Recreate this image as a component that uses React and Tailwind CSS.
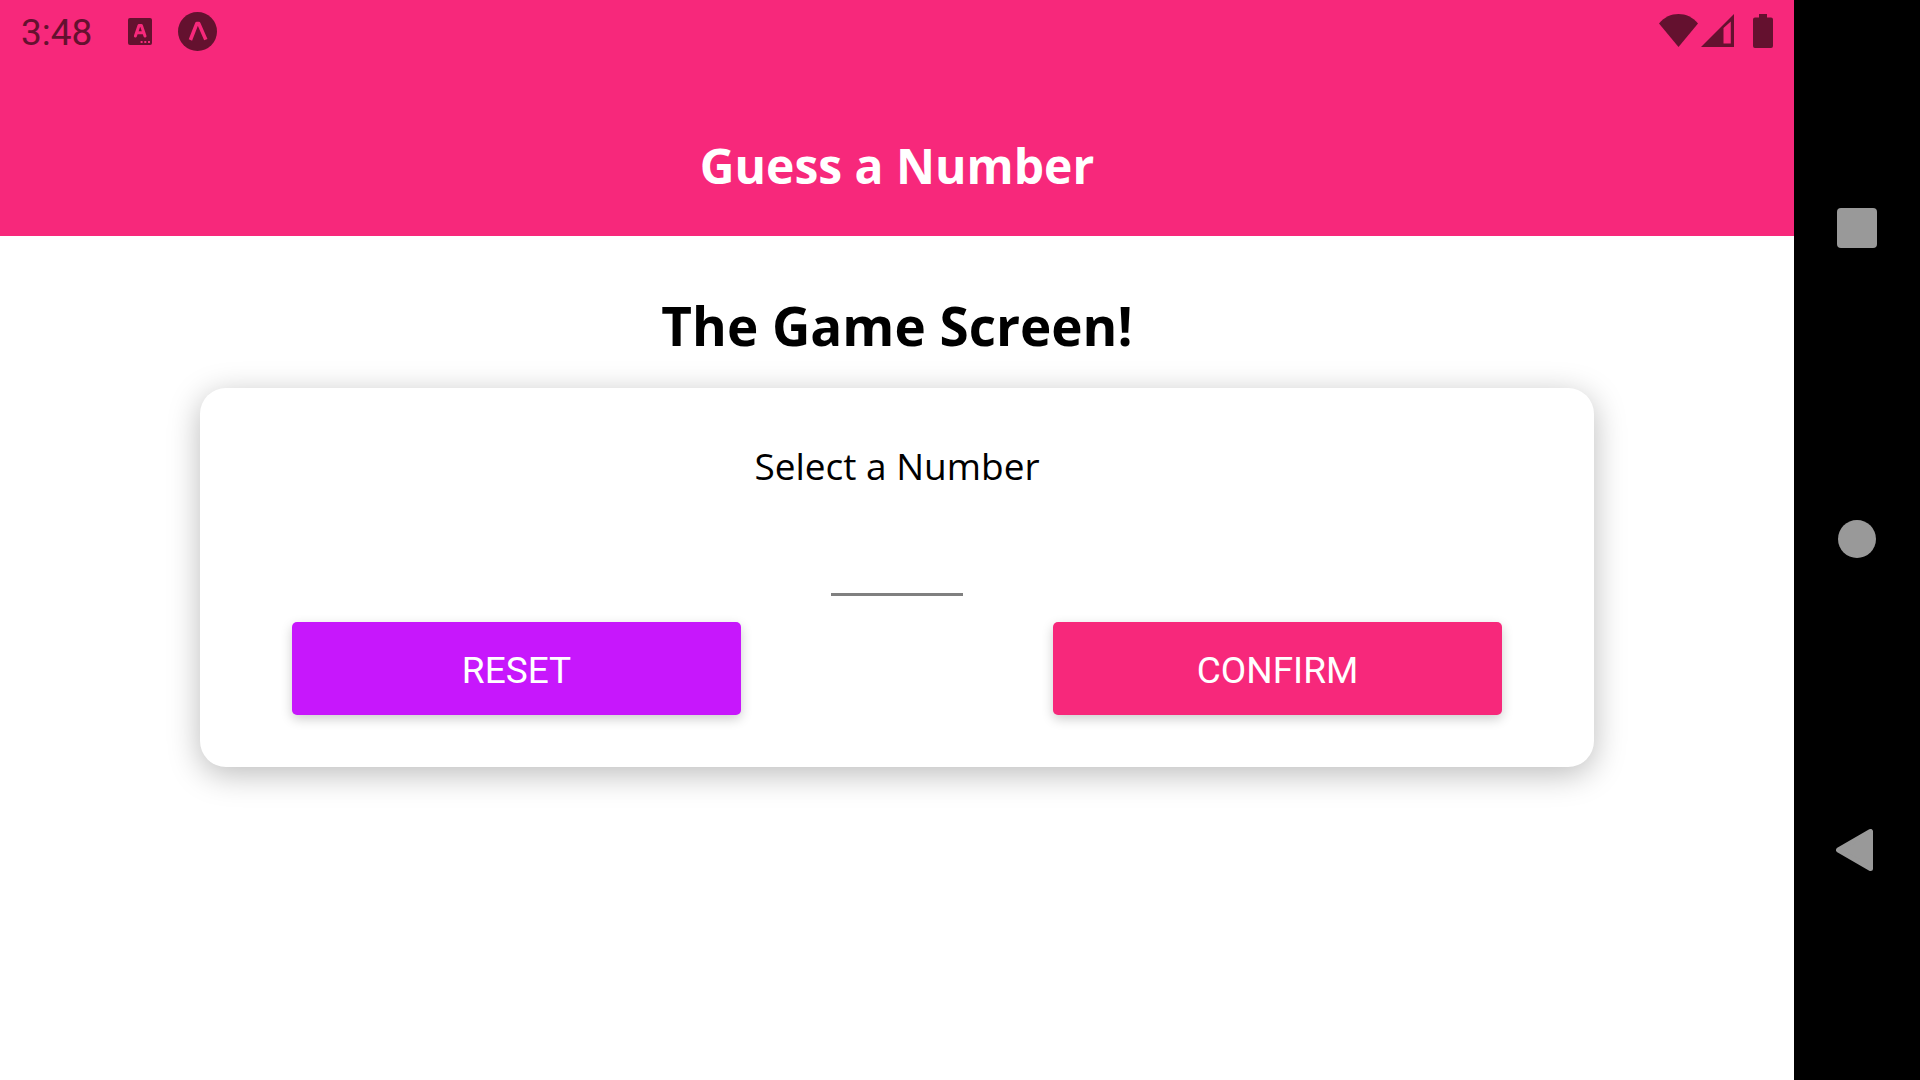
function StatusBar() {
  return (
    <div className="flex h-16 items-center justify-between px-[21px] text-[#64112f]">
      <div className="flex items-center">
        <span className="w-[107px] pt-[2px] font-[Roboto,sans-serif] text-[37px] leading-[62px]">3:48</span>
        <svg width="24" height="28" viewBox="0 0 24 28" className="mr-[26px]" aria-hidden="true">
          <rect width="24" height="27" rx="2" fill="currentColor" />
          <path d="M7.400 18 11 7.600h2.400L17 18M8.800 14.800h6.800" fill="none" stroke="#f7287b" strokeWidth="3" strokeLinecap="round" strokeLinejoin="round" />
          <path d="M12.600 23h2v2h-2zM16.300 23h2v2h-2zM20 23h2v2h-2z" fill="#f7287b" />
        </svg>
        <svg width="39" height="40" viewBox="0 0 39 40" aria-hidden="true">
          <circle cx="19.5" cy="19.5" r="19.5" fill="currentColor" />
          <path d="M12.400 28 18.800 11.600h2L27.800 27.600" fill="none" stroke="#f7287b" strokeWidth="3.6" strokeLinejoin="round" />
        </svg>
      </div>
      <div className="flex items-center">
        <svg width="39" height="36" viewBox="0 0 39 36" className="mr-[3px]" aria-hidden="true">
          <path d="M0 9.500C5.400 3 12 0 19.500 0S33.600 3 39 9.500L19.500 33z" fill="currentColor" />
        </svg>
        <svg width="33" height="36" viewBox="0 0 33 36" className="mr-[19px]" aria-hidden="true">
          <path d="M0 33 33 0v33zM22.500 14v15.500h7.300V7.500z" fillRule="evenodd" fill="currentColor" />
        </svg>
        <svg width="20" height="36" viewBox="0 0 20 36" aria-hidden="true">
          <path d="M6 0h8v3.500h4a2 2 0 0 1 2 2V32a2 2 0 0 1-2 2H2a2 2 0 0 1-2-2V5.500a2 2 0 0 1 2-2h4z" fill="currentColor" />
        </svg>
      </div>
    </div>
  );
}

function NavigationBar() {
  return (
    <nav className="grid w-[126px] shrink-0 grid-rows-3 bg-black pb-[74px] pt-[72px] text-[#999999]">
      <button type="button" aria-label="Recent apps" className="flex items-center justify-center">
        <svg width="40" height="40" viewBox="0 0 40 40"><rect width="40" height="40" rx="4" fill="currentColor" /></svg>
      </button>
      <button type="button" aria-label="Home" className="flex items-center justify-center">
        <svg width="38" height="38" viewBox="0 0 38 38"><circle cx="19" cy="19" r="19" fill="currentColor" /></svg>
      </button>
      <button type="button" aria-label="Back" className="flex items-center justify-center">
        <svg width="42" height="42" viewBox="0 0 42 42">
          <path d="M2.500 21 34.500 2.500v37z" fill="currentColor" stroke="currentColor" strokeWidth="5" strokeLinejoin="round" />
        </svg>
      </button>
    </nav>
  );
}

function ActionButton({ type, color, children }) {
  return (
    <button
      type={type}
      className={`rounded-[5px] pb-[20px] pt-[25px] font-[Roboto,sans-serif] text-[37px] leading-[48px] text-white shadow-[0_4px_12px_rgba(0,0,0,0.2)] ${color}`}
    >
      {children}
    </button>
  );
}

export default function App() {
  return (
    <div className="flex min-h-screen bg-white font-['Open_Sans',sans-serif] text-black">
      <div className="min-w-0 flex-1">
        <header className="bg-[#f7287b] pb-[38px]">
          <StatusBar />
          <h1 className="pt-[70px] text-center text-[48px] font-bold leading-[64px] text-white">Guess a Number</h1>
        </header>
        <main className="px-[200px] pt-[54px]">
          <h2 className="mb-[26px] text-center text-[53px] font-bold leading-[72px]">The Game Screen!</h2>
          <form
            onSubmit={(event) => event.preventDefault()}
            className="flex flex-col items-center rounded-[26px] bg-white px-[92px] py-[52px] shadow-[0_7px_32px_rgba(0,0,0,0.27)]"
          >
            <label htmlFor="guess" className="text-[37px] leading-[52px]">Select a Number</label>
            <input
              id="guess"
              type="text"
              inputMode="numeric"
              maxLength={2}
              className="mb-[26px] mt-[26px] h-[78px] w-[132px] border-b-[3px] border-[#808080] text-center text-[37px] outline-none"
            />
            <div className="grid w-full grid-cols-2 gap-[312px]">
              <ActionButton type="reset" color="bg-[#c717fc]">RESET</ActionButton>
              <ActionButton type="submit" color="bg-[#f7287b]">CONFIRM</ActionButton>
            </div>
          </form>
        </main>
      </div>
      <NavigationBar />
    </div>
  );
}
